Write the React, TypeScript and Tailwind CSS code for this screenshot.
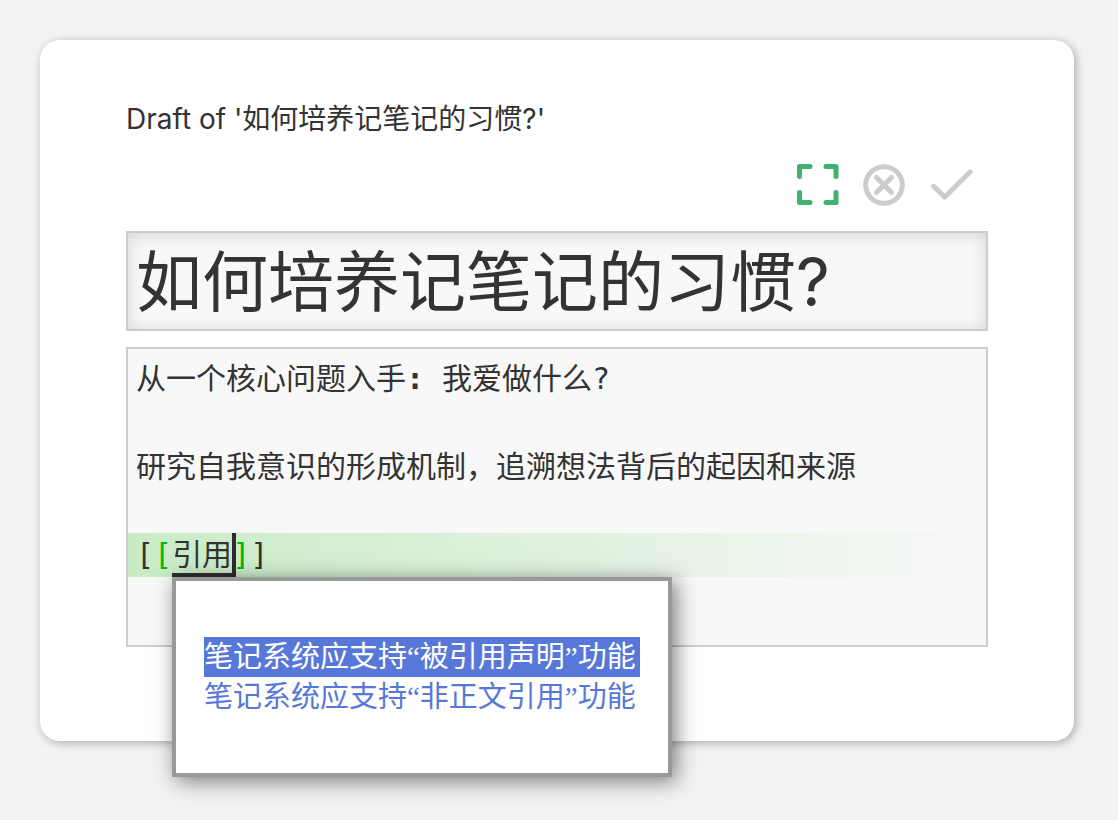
import { useState } from "react";

const SUGGESTIONS = [
  "笔记系统应支持“被引用声明”功能",
  "笔记系统应支持“非正文引用”功能",
];

const INITIAL_TITLE = "如何培养记笔记的习惯?";

const INITIAL_BODY = [
  "从一个核心问题入手: 我爱做什么?",
  "",
  "研究自我意识的形成机制，追溯想法背后的起因和来源",
  "",
  "[[引用]]",
].join("\n");

function FullScreenIcon() {
  return (
    <svg
      viewBox="0 0 44 44"
      className="size-11"
      fill="none"
      stroke="currentColor"
      strokeWidth="5"
      strokeLinecap="round"
      strokeLinejoin="round"
    >
      <path d="M3.5 13.5V3.5h10.5M30 3.5h10v10M40 29.5v10H30M14 39.5H3.5v-10" />
    </svg>
  );
}

function CancelIcon() {
  return (
    <svg viewBox="0 0 44 44" className="size-11" fill="none" stroke="currentColor" strokeWidth="5">
      <circle cx="22" cy="22" r="18.3" />
      <path d="M14.5 14.5l15 15M29.5 14.5l-15 15" strokeLinecap="round" />
    </svg>
  );
}

function DoneIcon() {
  return (
    <svg
      viewBox="0 0 44 44"
      className="size-11 overflow-visible"
      fill="none"
      stroke="currentColor"
      strokeWidth="5"
      strokeLinecap="round"
      strokeLinejoin="round"
    >
      <path d="M5.6 23.2L16.8 34L42 9" />
    </svg>
  );
}

// One painted line of the editor. Text inside [[ ]] is the link being typed.
function EditorLine({ text }: { text: string }) {
  const match = text.match(/^\[\[(.*)\]\]$/);
  if (!match) {
    return (
      <div className="min-h-11 px-2">
        {text.split(/(:)/).map((part, i) => (part === ":" ? <b key={i}>:</b> : part))}
      </div>
    );
  }
  return (
    <div className="min-h-11 bg-linear-to-r from-[#c8ebc5] to-[#f8f8f8] px-2">
      [<span className="text-[#00bb00]">[</span>
      <span className="relative inline-block h-11 align-top">
        {match[1]}
        <span className="absolute top-0 -right-1 bottom-0 left-0 border-r-4 border-b-4 border-[#2d2d2d]" />
      </span>
      <span className="text-[#00bb00]">]</span>]
    </div>
  );
}

export default function App() {
  const [title, setTitle] = useState(INITIAL_TITLE);
  const [body, setBody] = useState(INITIAL_BODY);
  const [selected, setSelected] = useState(0);

  return (
    <div className="min-h-screen bg-[#f3f3f3] py-10 pr-11 pl-10 font-[Inter,'Noto_Sans_CJK_SC',sans-serif] text-[#333333]">
      <main className="rounded-[20px] bg-white px-[86px] pt-[59px] pb-[94px] shadow-[2px_2px_10px_rgba(0,0,0,0.3)]">
        <h1 className="text-[28px] leading-10">Draft of '{INITIAL_TITLE}'</h1>

        {/* Toolbar */}
        <div className="mt-6 flex justify-end gap-[22px] pr-4 text-[#cccccc]">
          <button type="button" aria-label="Full screen" className="text-[#3eb370]">
            <FullScreenIcon />
          </button>
          <button type="button" aria-label="Cancel">
            <CancelIcon />
          </button>
          <button type="button" aria-label="Done">
            <DoneIcon />
          </button>
        </div>

        <input
          type="text"
          aria-label="Title"
          value={title}
          onChange={(e) => setTitle(e.target.value)}
          className="mt-6 block h-[100px] w-full border-2 border-[#cccccc] bg-[#f8f8f8] px-2 pb-2 text-[66px] shadow-[inset_0_2px_16px_rgba(0,0,0,0.15)] outline-none"
        />

        {/* Editor: painted lines with the textarea stacked on top */}
        <div className="relative mt-4 grid min-h-[300px] border-2 border-[#cccccc] bg-[#f8f8f8] font-['DejaVu_Sans_Mono','Noto_Sans_CJK_SC',monospace] text-[30px] leading-11">
          <div aria-hidden="true" className="col-start-1 row-start-1 py-2 whitespace-pre-wrap">
            {body.split("\n").map((line, i) => (
              <EditorLine key={i} text={line} />
            ))}
          </div>
          <textarea
            aria-label="Text"
            value={body}
            onChange={(e) => setBody(e.target.value)}
            spellCheck={false}
            className="z-10 col-start-1 row-start-1 resize-none overflow-hidden bg-transparent p-2 text-transparent outline-none"
          />

          {/* Link autocomplete, the serif face only supplies the curly quotes */}
          <ul className="absolute top-[228px] left-11 z-20 border-4 border-[#999999] bg-white px-7 py-14 font-['Liberation_Serif','Noto_Sans_CJK_SC',sans-serif] text-[29px] leading-10 shadow-[4px_4px_20px_rgba(0,0,0,0.5)]">
            {SUGGESTIONS.map((item, i) => (
              <li key={item}>
                <button
                  type="button"
                  onClick={() => setSelected(i)}
                  className={
                    i === selected
                      ? "block w-[436px] bg-[#5778d8] text-left whitespace-nowrap text-white"
                      : "block w-[436px] text-left whitespace-nowrap text-[#5778d8]"
                  }
                >
                  {item}
                </button>
              </li>
            ))}
          </ul>
        </div>
      </main>
    </div>
  );
}
